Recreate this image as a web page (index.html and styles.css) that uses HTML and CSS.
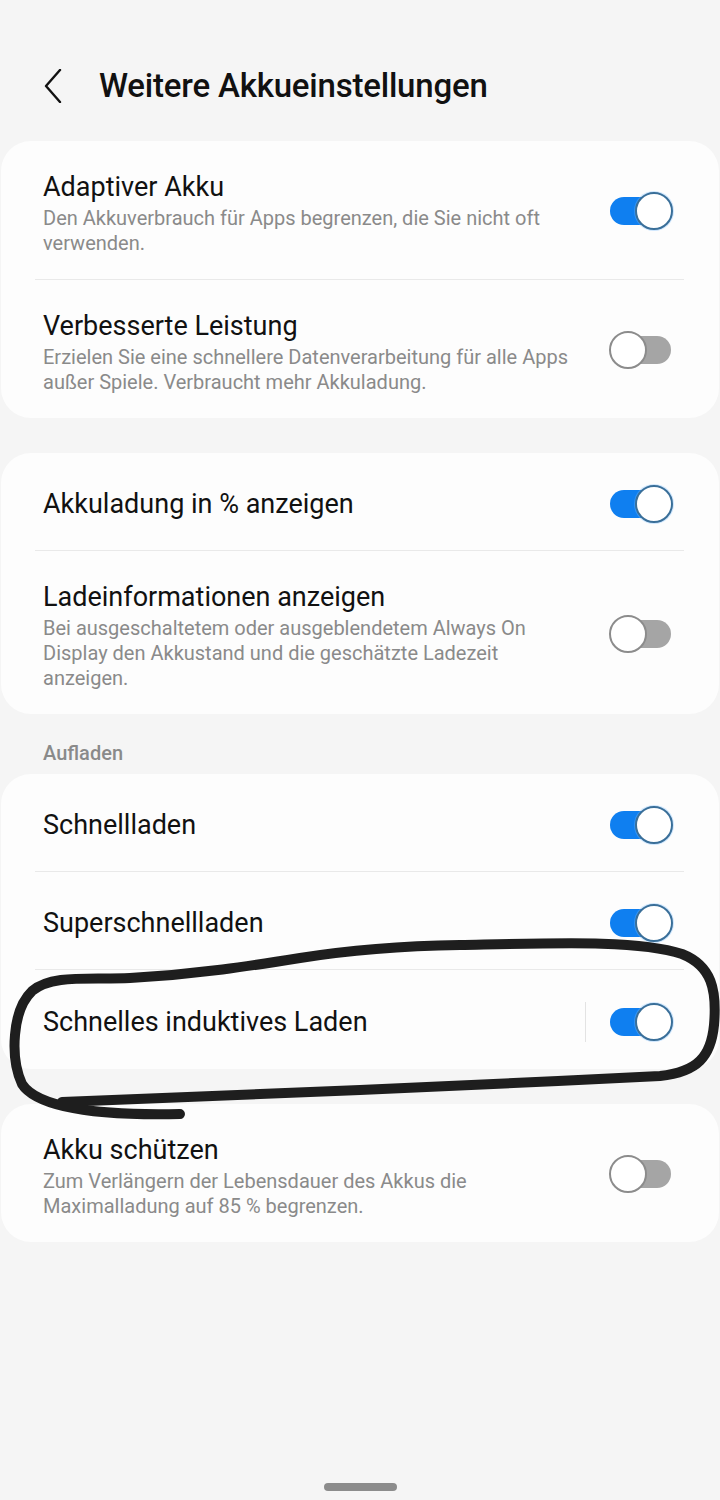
FILE: index.html
```html
<!DOCTYPE html>
<html lang="de">
<head>
    <meta charset="UTF-8">
    <meta name="viewport" content="width=device-width, initial-scale=1.0">
    <title>Weitere Akkueinstellungen</title>
    <link rel="stylesheet" href="styles.css">
</head>
<body>

<header class="top-bar">
    <span class="back">
        <svg width="20" height="34" viewBox="0 0 20 34"><path d="M16 1 L2 17 L16 33" fill="none" stroke="#111" stroke-width="2.4" stroke-linecap="round" stroke-linejoin="round"/></svg>
    </span>
    <h1>Weitere Akkueinstellungen</h1>
</header>

<main class="settings">

    <!-- Akku -->
    <section class="card">
        <div class="row">
            <div class="row-text">
                <div class="row-title">Adaptiver Akku</div>
                <div class="row-sub">Den Akkuverbrauch für Apps begrenzen, die Sie nicht oft verwenden.</div>
            </div>
            <span class="switch on"></span>
        </div>
        <div class="divider"></div>
        <div class="row">
            <div class="row-text">
                <div class="row-title">Verbesserte Leistung</div>
                <div class="row-sub">Erzielen Sie eine schnellere Datenverarbeitung für alle Apps außer Spiele. Verbraucht mehr Akkuladung.</div>
            </div>
            <span class="switch"></span>
        </div>
    </section>

    <!-- Anzeige -->
    <section class="card">
        <div class="row single">
            <div class="row-text">
                <div class="row-title">Akkuladung in % anzeigen</div>
            </div>
            <span class="switch on"></span>
        </div>
        <div class="divider"></div>
        <div class="row">
            <div class="row-text">
                <div class="row-title">Ladeinformationen anzeigen</div>
                <div class="row-sub">Bei ausgeschaltetem oder ausgeblendetem Always On Display den Akkustand und die geschätzte Ladezeit anzeigen.</div>
            </div>
            <span class="switch"></span>
        </div>
    </section>

    <div class="section-label">Aufladen</div>

    <section class="card">
        <div class="row single">
            <div class="row-text">
                <div class="row-title">Schnellladen</div>
            </div>
            <span class="switch on"></span>
        </div>
        <div class="divider"></div>
        <div class="row single">
            <div class="row-text">
                <div class="row-title">Superschnellladen</div>
            </div>
            <span class="switch on"></span>
        </div>
        <div class="divider"></div>
        <div class="row single">
            <div class="row-text">
                <div class="row-title">Schnelles induktives Laden</div>
            </div>
            <span class="v-line"></span>
            <span class="switch on"></span>
        </div>
    </section>

    <section class="card">
        <div class="row">
            <div class="row-text">
                <div class="row-title">Akku schützen</div>
                <div class="row-sub">Zum Verlängern der Lebensdauer des Akkus die Maximalladung auf 85 % begrenzen.</div>
            </div>
            <span class="switch"></span>
        </div>
    </section>

</main>

<div class="nav-bar"><span class="handle"></span></div>

<!-- hand drawn marker loop over the page -->
<svg class="scribble" width="720" height="1500" viewBox="0 0 720 1500">
    <path d="M62 1102 C150 1099 280 1093 360 1090 C450 1086 560 1081 660 1076 C698 1072 711 1056 714 1025 C717 990 712 966 682 954 C640 940 560 943 460 945 C400 946 350 950 300 958 C250 966 200 974 130 978 C90 980 52 974 32 991 C12 1010 10 1058 22 1084 C36 1106 90 1116 180 1114"
          fill="none" stroke="#1e1e1e" stroke-width="10" stroke-linecap="round" stroke-linejoin="round"/>
</svg>

</body>
</html>
```

FILE: styles.css
```css
/* page */
body {
    margin: 0;
    width: 720px;
    height: 1500px;
    background-color: #f5f5f5;
    font-family: Roboto, "Noto Sans", sans-serif;
    color: #111;
    display: flex;
    flex-direction: column;
    position: relative;
    overflow: hidden;
}

/* header */
.top-bar {
    display: flex;
    align-items: center;
    height: 40px;
    padding: 66px 0 35px 44px;
}

.back {
    width: 20px;
    height: 34px;
    display: flex;
    margin-right: 35px;
}

.top-bar h1 {
    margin: 0;
    font-size: 33px;
    font-weight: 500;
    line-height: 40px;
    letter-spacing: -0.2px;
}

/* cards */
.settings {
    padding: 0 1px;
}

.card {
    background-color: #fdfdfd;
    border-radius: 30px;
}

.card + .card {
    margin-top: 35px;
}

.row {
    display: flex;
    align-items: center;
    padding: 25px 46px 23px 42px;
}

.row.single {
    padding-top: 32px;
    padding-bottom: 27px;
}

.row-text {
    flex: 1;
    padding: 4px 23px 0 0;
}

.row.single .row-text {
    padding-top: 0;
}

.row-title {
    font-size: 27px;
    line-height: 34px;
}

.row-sub {
    margin-top: 2px;
    font-size: 20px;
    line-height: 25px;
    color: #8a8a8a;
}

.divider {
    height: 1px;
    margin: 0 35px 0 34px;
    background-color: #e9e9e9;
}

.v-line {
    width: 1px;
    height: 40px;
    background-color: #e3e3e3;
    margin-left: -23px;
    margin-right: 23px;
}

.section-label {
    padding: 27px 42px 9px;
    font-size: 20px;
    font-weight: 500;
    line-height: 24px;
    color: #8a8a8a;
}

/* switches */
.switch {
    width: 64px;
    height: 38px;
    position: relative;
    flex-shrink: 0;
}

.switch::before {
    content: '';
    position: absolute;
    top: 5px;
    left: 4px;
    right: 2px;
    height: 28px;
    border-radius: 14px;
    background-color: #a5a5a5;
}

.switch::after {
    content: '';
    position: absolute;
    top: 0;
    left: 0;
    width: 34px;
    height: 34px;
    border: 2px solid #8c8c8c;
    border-radius: 50%;
    background-color: #fff;
}

.switch.on::before {
    left: 1px;
    right: 6px;
    background-color: #0f7ff0;
}

.switch.on::after {
    left: auto;
    right: 0;
    border-color: #3a6f99;
    box-shadow: 0 0 0 1px rgba(120, 190, 255, 0.35);
}

/* bottom gesture bar */
.nav-bar {
    margin-top: auto;
    display: flex;
    justify-content: center;
    padding-bottom: 9px;
}

.handle {
    width: 73px;
    height: 8px;
    border-radius: 4px;
    background-color: #8c8c8c;
}

/* marker drawing lies over everything */
.scribble {
    position: absolute;
    top: 0;
    left: 0;
    pointer-events: none;
}
```
